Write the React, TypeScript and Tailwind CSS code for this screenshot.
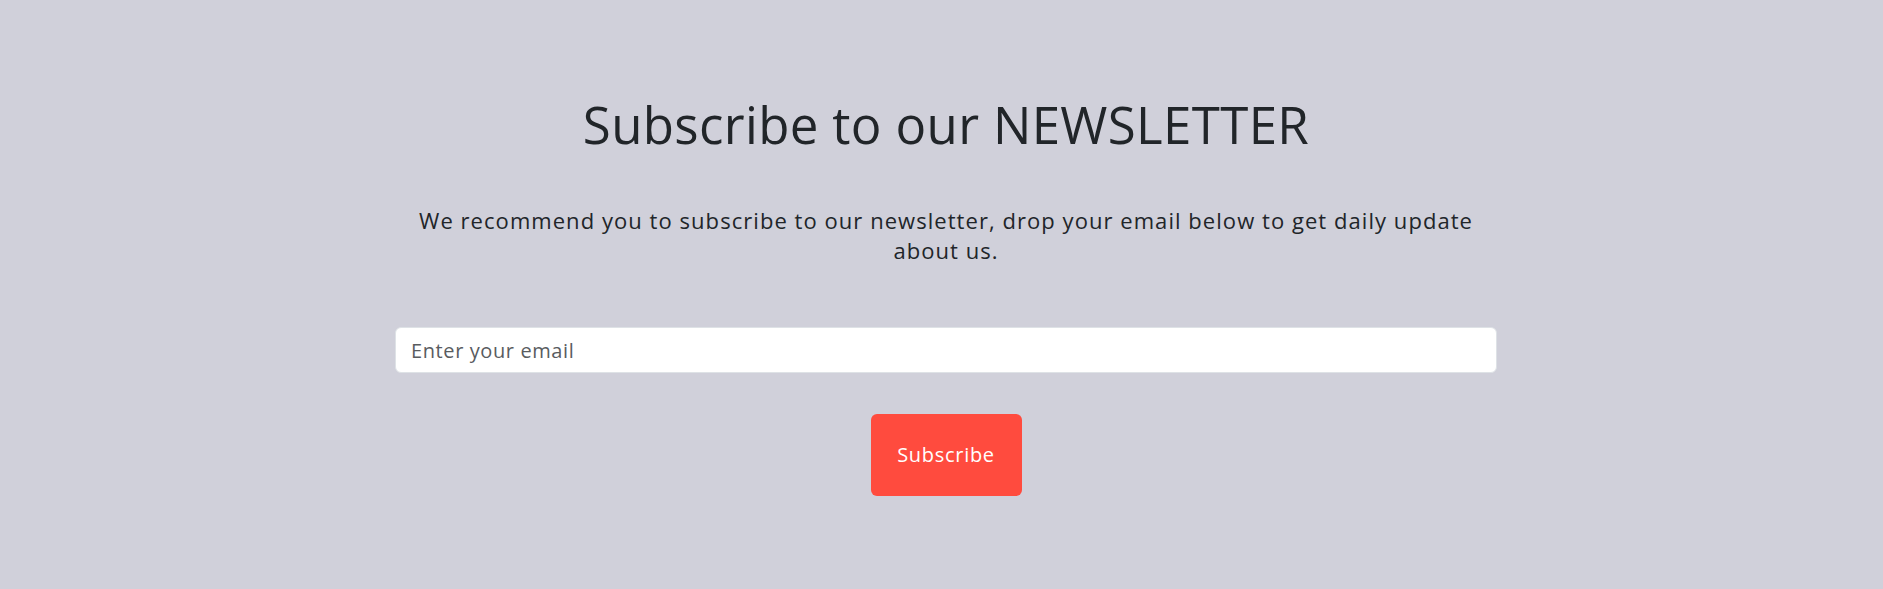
export default function App() {
  return (
    <section className="min-h-[589px] bg-[#d0d0da] pt-[94px] pl-[9px] font-['Open_Sans',sans-serif]">
      <div className="mx-auto w-[1102px] text-center">
        <h1 className="text-[51px] leading-[1.2] font-normal tracking-[0.35px] text-[#212529]">
          Subscribe to our NEWSLETTER
        </h1>

        <p className="mt-[50px] text-[22px] leading-[30px] tracking-[1.05px] text-[#212529]">
          We recommend you to subscribe to our newsletter, drop your email below to get daily update
          <br />
          about us.
        </p>

        <form className="mt-[62px] flex flex-col items-center" onSubmit={(e) => e.preventDefault()}>
          <input
            type="email"
            placeholder="Enter your email"
            className="w-full h-[46px] rounded-md border border-[#dee2e6] bg-white px-[15px] text-[20px] tracking-[0.6px] text-[#212529] placeholder:text-[#595c5f] outline-none"
          />
          <button
            type="submit"
            className="mt-[41px] w-[151px] h-[82px] rounded-md bg-[#ff4b3e] text-white text-[20px] tracking-[0.7px]"
          >
            Subscribe
          </button>
        </form>
      </div>
    </section>
  )
}
